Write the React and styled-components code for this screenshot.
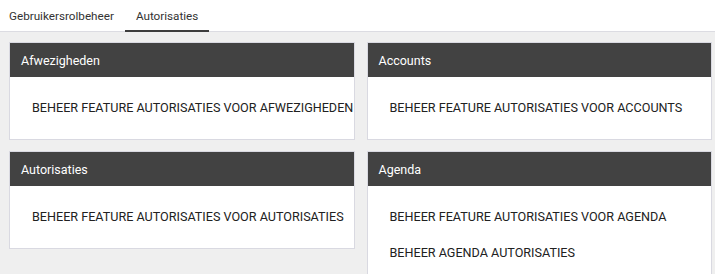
import styled, { createGlobalStyle } from "styled-components";

const GlobalStyle = createGlobalStyle`
  html, body {
    margin: 0;
    padding: 0;
    background-color: #efefef;
    font-family: Roboto, "Liberation Sans", Arial, sans-serif;
  }
`

const Page = styled.div`
  display: flex;
  flex-direction: column;
  width: 715px;
  height: 274px;
  overflow: hidden;
`

const TabBar = styled.div`
  display: flex;
  height: 32px;
  background-color: #ffffff;
  border-bottom: 1px solid #dcdce2;
`

const Tab = styled.div`
  display: flex;
  align-items: center;
  height: 32px;
  padding: 1px 11px 0;
  box-sizing: border-box;
  font-size: 11.7px;
  color: #333333;
  border-bottom: 2px solid ${(props) => (props.$active ? "#3d3d3d" : "transparent")};
  margin-bottom: -1px;

  &:first-child {
    padding-left: 9px;
  }
`

const Grid = styled.div`
  display: grid;
  grid-template-columns: 1fr 1fr;
  gap: 11px 12px;
  padding: 10px 3px 0 9px;
  align-items: start;
`

const Card = styled.div`
  display: flex;
  flex-direction: column;
  background-color: #ffffff;
  border: 1px solid #d9d9e1;
  overflow: hidden;
`

const CardHeader = styled.div`
  display: flex;
  align-items: center;
  height: 34px;
  padding: 0 11px;
  background-color: #424242;
  color: #ffffff;
  font-size: 12.5px;
`

const CardBody = styled.div`
  display: flex;
  flex-direction: column;
  padding: 12px 0 14px;
`

const Item = styled.div`
  display: flex;
  align-items: center;
  height: 36px;
  padding-left: 22px;
  font-size: 12.6px;
  color: #212121;
  white-space: nowrap;
`

const cards = [
  { title: "Afwezigheden", items: ["BEHEER FEATURE AUTORISATIES VOOR AFWEZIGHEDEN"] },
  { title: "Accounts", items: ["BEHEER FEATURE AUTORISATIES VOOR ACCOUNTS"] },
  { title: "Autorisaties", items: ["BEHEER FEATURE AUTORISATIES VOOR AUTORISATIES"] },
  { title: "Agenda", items: ["BEHEER FEATURE AUTORISATIES VOOR AGENDA", "BEHEER AGENDA AUTORISATIES"] },
]

const App = () => {
  return (
    <Page>
      <GlobalStyle />
      <TabBar>
        <Tab>Gebruikersrolbeheer</Tab>
        <Tab $active>Autorisaties</Tab>
      </TabBar>
      <Grid>
        {cards.map((card) => (
          <Card key={card.title}>
            <CardHeader>{card.title}</CardHeader>
            <CardBody>
              {card.items.map((item) => (
                <Item key={item}>{item}</Item>
              ))}
            </CardBody>
          </Card>
        ))}
      </Grid>
    </Page>
  )
}

export default App
